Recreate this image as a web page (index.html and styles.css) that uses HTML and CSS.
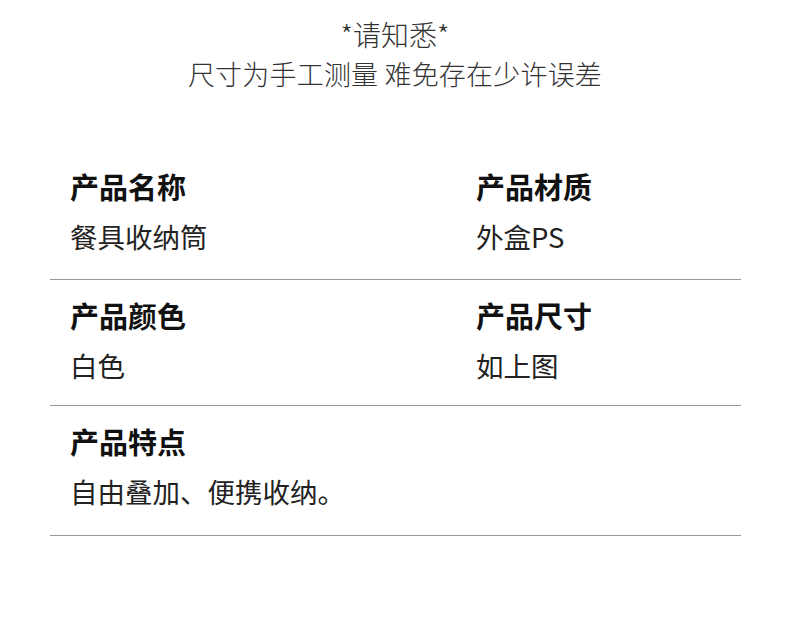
FILE: index.html
```html
<!DOCTYPE html>
<html lang="zh-CN">
<head>
<meta charset="utf-8">
<link rel="stylesheet" href="styles.css">
</head>
<body>
<header class="notice">
  <div class="notice-title">*请知悉*</div>
  <div class="notice-sub">尺寸为手工测量 难免存在少许误差</div>
</header>
<section class="specs">
  <div class="row row-first">
    <div class="cell"><div class="label">产品名称</div><div class="value">餐具收纳筒</div></div>
    <div class="cell"><div class="label">产品材质</div><div class="value">外盒PS</div></div>
  </div>
  <div class="row">
    <div class="cell"><div class="label">产品颜色</div><div class="value">白色</div></div>
    <div class="cell"><div class="label">产品尺寸</div><div class="value">如上图</div></div>
  </div>
  <div class="row row-last">
    <div class="cell wide"><div class="label">产品特点</div><div class="value">自由叠加、便携收纳。</div></div>
  </div>
</section>
</body>
</html>
```
FILE: styles.css
```css
html, body {
  margin: 0;
  padding: 0;
  background: #fff;
}
body {
  font-family: "Noto Sans CJK SC", "Noto Sans", sans-serif;
  width: 790px;
}
.notice {
  padding-top: 14px;
  text-align: center;
  color: #333;
  line-height: 40px;
  font-weight: 300;
}
.notice-title {
  font-size: 28px;
}
.notice-sub {
  font-size: 27px;
  letter-spacing: 0.2px;
}
.specs {
  margin: 57px 49px 0 50px;
}
.row {
  display: grid;
  grid-template-columns: 426px 1fr;
  border-bottom: 1px solid #999;
  padding: 17px 0 22px;
}
.row-first {
  padding-bottom: 25px;
}
.row-last {
  padding-bottom: 26px;
}
.cell {
  padding-left: 20px;
}
.cell + .cell {
  padding-left: 0;
}
.label {
  font-size: 29px;
  line-height: 36px;
  font-weight: 700;
  color: #111;
}
.value {
  margin-top: 14px;
  font-size: 27.5px;
  line-height: 36px;
  color: #222;
}
```
